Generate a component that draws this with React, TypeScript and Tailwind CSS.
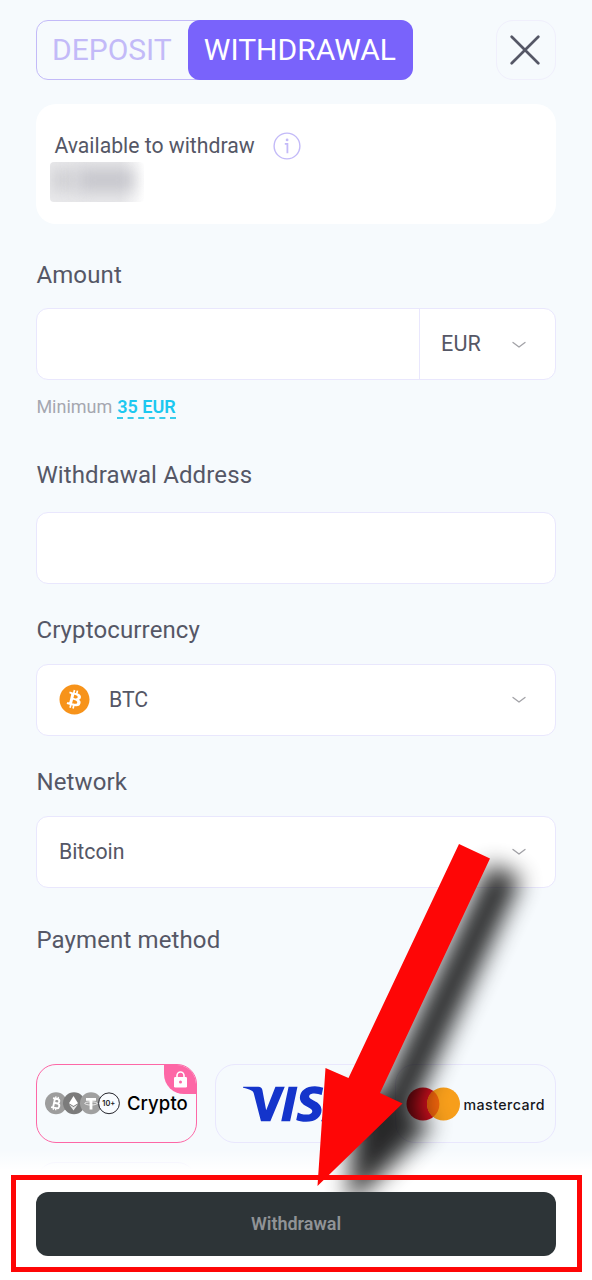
import React from "react";
import { FaBitcoin } from "react-icons/fa6";
import { SiVisa } from "react-icons/si";

const Chevron: React.FC = () => (
  <svg className="w-[14px] h-[8px] shrink-0" viewBox="0 0 14 8" fill="none" stroke="#a3a3a8" strokeWidth="1.3">
    <path d="M1 1.5 L7 6 L13 1.5" strokeLinecap="round" strokeLinejoin="round" />
  </svg>
);

const CryptoCoins: React.FC = () => (
  <svg className="w-[75px] h-[23px] shrink-0" viewBox="0 0 75 23">
    <circle cx="11" cy="11.3" r="11" fill="#9d9d9d" />
    <g transform="rotate(12 11 11.3)" fill="none" stroke="#fff" strokeWidth="1.9">
      <path d="M7 6.8h4.6a2.2 2.2 0 0 1 0 4.4H9M9 11.2h3.4a2.4 2.4 0 0 1 0 4.8H7M9 6.8V16" />
      <path d="M9.6 4.6v2.2M12 4.6v2.2M9.6 16v2.2M12 16v2.2" strokeWidth="1.3" />
    </g>
    <circle cx="29" cy="11.3" r="11" fill="#7b7b7b" />
    <path d="M28.5 4 L33 11.3 L28.5 14 L24 11.3Z" fill="#fff" />
    <path d="M24 12.3 L28.5 15 L33 12.3 L28.5 18.6Z" fill="#e6e6e6" />
    <circle cx="46" cy="11.3" r="11" fill="#a0a0a0" />
    <path d="M41 6h10v2.8h-3.6v8.7h-2.8V8.8H41z" fill="#fff" />
    <ellipse cx="46" cy="11.4" rx="6.2" ry="1.6" fill="none" stroke="#fff" strokeWidth=".8" />
    <circle cx="64" cy="11.3" r="10.4" fill="#f9fcff" stroke="#26262d" strokeWidth="1" />
    <text x="63.8" y="14" fontSize="7.4" fontWeight="600" fontFamily="Inter, sans-serif" textAnchor="middle" fill="#222">
      10+
    </text>
  </svg>
);

const Label: React.FC<{ children: React.ReactNode }> = ({ children }) => (
  <h2 className="text-2xl leading-8 tracking-[0.13px] text-[#555766]">{children}</h2>
);

const fieldClass = "flex items-center h-[72px] bg-white border-[1.5px] border-[#e9e7fd] rounded-xl";

const App: React.FC = () => {
  return (
    <div className="relative w-[592px] h-[1280px] overflow-hidden bg-[#f6fafd] font-[Roboto,sans-serif] text-[#555766]">
      <main className="relative h-[1170px] px-[36.4px] pt-5 overflow-hidden">
        <header className="flex justify-between">
          <div className="flex justify-between h-[60px] rounded-xl border-[1.5px] border-[#c3baf8] w-[377px]">
            <button className="w-[149px] text-[30px] leading-none text-[#c3baf8]">DEPOSIT</button>
            <button className="-m-px w-[225px] pr-[2px] shrink-0 rounded-xl bg-[#7963fb] text-[30px] leading-none text-white">WITHDRAWAL</button>
          </div>
          <button className="flex items-center justify-center w-[60px] h-[60px] pr-px rounded-[17px] border-[1.5px] border-[#f0effc]">
            <svg className="w-[30px] h-[30px]" viewBox="0 0 30 30" stroke="#555766" strokeWidth="2.7" strokeLinecap="round">
              <path d="M1.7 1.7 L28.3 28.3 M28.3 1.7 L1.7 28.3" />
            </svg>
          </button>
        </header>

        <section className="mt-6 h-[120px] rounded-[20px] bg-white pl-[13.5px] pt-[26px]">
          <div className="flex items-center gap-[18px] h-8 pl-[4.5px]">
            <span className="text-[21.2px]">Available to withdraw</span>
            <svg className="w-7 h-7" viewBox="0 0 28 28" fill="none" stroke="#c3baf8" strokeWidth="1.4">
              <circle cx="14" cy="14" r="12.9" />
              <path d="M11.8 11.8h2.6v9.4" strokeWidth="1.8" />
              <circle cx="14.1" cy="7.9" r="1.4" fill="#c3baf8" stroke="none" />
            </svg>
          </div>
          {/* hidden balance */}
          <div className="flex w-[94px] h-10 overflow-hidden rounded-sm bg-linear-to-r from-[#e9e9eb] from-75% to-white">
            <div className="mt-1.5 w-7 h-6 bg-[#d3d3d7] blur-[7px]" />
            <div className="mt-1.5 w-[56px] h-6 bg-[#c6c6cc] blur-[8px]" />
          </div>
        </section>

        <section className="mt-[35px]">
          <Label>Amount</Label>
          <div className={`${fieldClass} mt-[17px]`}>
            <div className="flex-1" />
            <div className="flex items-center justify-between w-[136px] h-full pt-px pl-[21.5px] pr-[29px] border-l-[1.5px] border-[#e9e7fd]">
              <span className="text-[21.6px]">EUR</span>
              <Chevron />
            </div>
          </div>
          <p className="mt-[14px] mb-[39px] flex gap-[5px] text-lg leading-[26px] text-[#a5a7b0]">
            Minimum <span className="h-[25px] font-semibold text-[#1cc8f0] border-b-2 border-dashed border-[#38cdec]">35 EUR</span>
          </p>
        </section>

        <section>
          <Label>Withdrawal Address</Label>
          <div className={`${fieldClass} mt-[21px]`} />
        </section>

        <section className="mt-[30px]">
          <Label>Cryptocurrency</Label>
          <div className={`${fieldClass} mt-[18px] pl-[21.5px] pr-[29px]`}>
            <FaBitcoin className="mb-px w-[31px] h-[31px] text-[#f7931a]" />
            <span className="ml-[19px] flex-1 text-[21.3px]">BTC</span>
            <Chevron />
          </div>
        </section>

        <section className="mt-[30px]">
          <Label>Network</Label>
          <div className={`${fieldClass} mt-[18px] pl-[21.5px] pr-[29px]`}>
            <span className="flex-1 text-[21.3px]">Bitcoin</span>
            <Chevron />
          </div>
        </section>

        <section className="mt-[36px]">
          <Label>Payment method</Label>
          <div className="mt-[108px] grid grid-cols-3 gap-x-[18px] gap-y-[19px]">
            <div className="relative flex items-center gap-[6.5px] h-[79px] pl-[8px] overflow-hidden rounded-[20px] border-[1.5px] border-[#fd67a6]">
              <CryptoCoins />
              <span className="font-[Inter,sans-serif] text-[18.5px] font-medium tracking-[0.1px] text-black">Crypto</span>
              <div className="absolute -top-px -right-px w-[33px] h-[30px] rounded-bl-[20px] bg-[#fd67a6]">
                <svg className="ml-[10px] mt-[7px] w-[13px] h-[17px]" viewBox="0 0 13 17">
                  <path d="M3 7V4.5a3.5 3.5 0 0 1 7 0V7" fill="none" stroke="#fff" strokeWidth="1.6" />
                  <rect x="0" y="6" width="13" height="10.5" rx="1.3" fill="#fff" />
                  <circle cx="6.5" cy="11" r="1.5" fill="#fd67a6" />
                </svg>
              </div>
            </div>
            <div className="flex items-center h-[79px] pl-[27px] overflow-hidden rounded-[20px] border-[1.5px] border-[#e9e7fd]">
              <SiVisa className="w-[110px] h-[110px] shrink-0 text-[#1434cb]" />
            </div>
            <div className="flex items-center gap-[4px] h-[79px] pl-[10px] rounded-[20px] border-[1.5px] border-[#e9e7fd]">
              <svg className="w-[54px] h-[34px] shrink-0" viewBox="0 0 54 34">
                <circle cx="17" cy="17" r="16.5" fill="#d8101f" />
                <circle cx="37.5" cy="17" r="16.5" fill="#f79e1b" />
                <path d="M27.2 4.1a16.5 16.5 0 0 1 0 25.8a16.5 16.5 0 0 1 0-25.8" fill="#ea620c" />
              </svg>
              <span className="relative top-px font-[Inter,sans-serif] text-[14.2px] font-medium tracking-[0.45px] text-[#17171c]">mastercard</span>
            </div>
            <div className="h-[79px] rounded-[20px] border-[1.5px] border-[#e9e7fd]" />
          </div>
        </section>
        <div className="absolute inset-x-0 bottom-0 h-5 bg-linear-to-b from-transparent to-white" />
      </main>

      <footer className="h-[110px] px-[36.4px] pt-[22px] bg-white">
        <button className="w-full h-16 rounded-xl bg-[#2d3437] text-lg font-semibold text-[#909396]">Withdrawal</button>
      </footer>

      {/* pointer and highlight around the submit button */}
      <div className="absolute left-[11px] top-[1175px] w-[571px] h-[97px] border-5 border-[#fe0606]" />
      <svg className="absolute left-0 top-[820px] w-[592px] h-[372px] pointer-events-none" viewBox="0 820 592 372">
        <defs>
          <filter id="soft" x="-30%" y="-30%" width="160%" height="160%">
            <feGaussianBlur stdDeviation="11.5" />
          </filter>
        </defs>
        <path
          d="M459 844 L490 858.5 L380 1093 L402.5 1103.5 L317.5 1186 L325.5 1068 L348.5 1078Z"
          transform="translate(31 20)"
          fill="#000"
          opacity=".84"
          filter="url(#soft)"
        />
        <path d="M11 1175H582V1192H577V1180H16V1192H11Z" fill="#fe0606" />
        <path d="M459 844 L490 858.5 L380 1093 L402.5 1103.5 L317.5 1186 L325.5 1068 L348.5 1078Z" fill="#fe0606" />
      </svg>
    </div>
  );
};

export default App;
